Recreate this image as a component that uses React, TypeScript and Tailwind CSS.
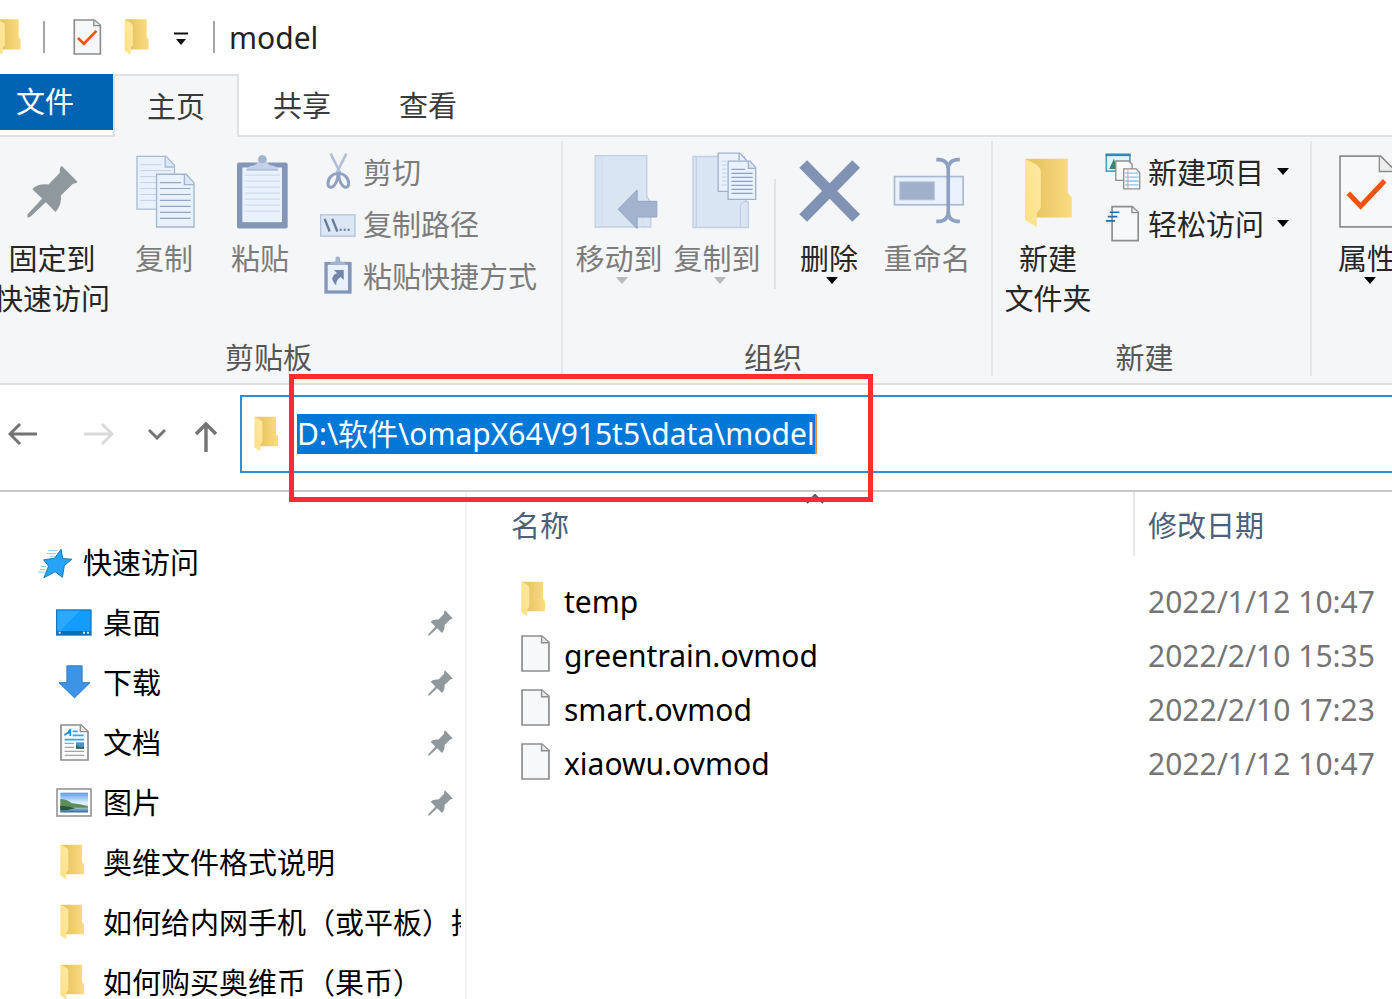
import { useEffect, useRef, useState } from "react";
import type { ReactNode } from "react";

type IconProps = { className?: string };

const Folder = ({ className = "w-6 h-9" }: IconProps) => (
  <svg viewBox="0 0 72 106" className={className} aria-hidden="true">
    <defs>
      <linearGradient id="folderBack" x1="0" x2="1">
        <stop offset="0.3" stopColor="#eac765" />
        <stop offset="1" stopColor="#fbdc82" />
      </linearGradient>
      <linearGradient id="folderFlap" x1="0" x2="1" y1="1" y2="0">
        <stop offset="0" stopColor="#ffdf83" />
        <stop offset="1" stopColor="#ffe9a8" />
      </linearGradient>
    </defs>
    <path d="M2 1H66V53L72 60V90H18V40L2 4Z" fill="url(#folderBack)" />
    <path
      d="M1 2C12 6 25 12 25 20V74C25 80 19 80 19 86V105L1 93Z"
      fill="url(#folderFlap)"
    />
  </svg>
);

const Pin = ({ className = "w-[25px] h-[26px]" }: IconProps) => (
  <svg viewBox="82 76 152 156" className={className} aria-hidden="true">
    <path
      d="M185 77L233 126Q227 131 219 131L183 166Q186 195 167 215L138 186L92 229Q84 233 83 230L84 222L127 175L98 147Q112 130 146 133L180 98Q178 84 185 77Z"
      fill="#8f999d"
    />
  </svg>
);

const File = ({ className = "w-[29px] h-[37px]" }: IconProps) => (
  <svg viewBox="0 0 86 110" className={className} aria-hidden="true">
    <path d="M3 3H62L83 22V107H3Z" fill="#f7f8f9" stroke="#8d8d8d" strokeWidth="5" />
    <path d="M61 4V23H82" fill="#e8e8e8" stroke="#8d8d8d" strokeWidth="4" />
  </svg>
);

const CheckedFile = ({ className }: IconProps) => (
  <svg viewBox="222 59 86 109" className={className} aria-hidden="true">
    <path d="M225 62H286L304 78V165H225Z" fill="#f7f8f9" stroke="#8d8d8d" strokeWidth="5" />
    <path d="M284 63V79H303" fill="#e8e8e8" stroke="#8d8d8d" strokeWidth="4" />
    <path d="M236 116L254 134L292 95" fill="none" stroke="#f4510b" strokeWidth="8" />
  </svg>
);

const Properties = () => (
  <svg viewBox="1077 75 168 218" className="w-14 h-[73px]" aria-hidden="true">
    <path d="M1080 78H1202L1242 118V290H1080Z" fill="#f7f8f9" stroke="#8d8d8d" strokeWidth="5" />
    <path d="M1198 79V124H1242" fill="#ececec" stroke="#8d8d8d" strokeWidth="4" />
    <path d="M1105 189L1142 228L1214 152" fill="none" stroke="#f4510b" strokeWidth="15" />
  </svg>
);

const Caret = ({ className = "text-black" }: IconProps) => (
  <svg viewBox="0 0 14 7" className={`w-3.5 h-[7px] ${className}`} aria-hidden="true">
    <path d="M1 0H13L7 7Z" fill="currentColor" />
  </svg>
);

const Copy = () => (
  <svg viewBox="403 44 184 220" className="w-[61px] h-[73px]" aria-hidden="true">
    <g fill="#e9f1fc" stroke="#a9b9d3" strokeWidth="4">
      <path d="M412 48H500L525 75V207H412Z" />
      <path d="M497 48V80H525" fill="#dce7f6" />
    </g>
    <path d="M422 73H487M422 91H515M422 109H515M422 127H515M422 145H515M422 163H515M422 181H515" stroke="#c4d1e6" strokeWidth="3" />
    <g fill="#e9f1fc" stroke="#a3b4d0" strokeWidth="4">
      <path d="M471 102H560L584 128V261H471Z" />
      <path d="M555 102V133H584" fill="#dce7f6" />
    </g>
    <path d="M481 127H545M481 145H574M481 163H574M481 181H574M481 199H574M481 217H574M481 235H574" stroke="#93a5c4" strokeWidth="3.5" />
  </svg>
);

const Clipboard = () => (
  <svg viewBox="700 40 168 224" className="w-14 h-[75px]" aria-hidden="true">
    <rect x="715" y="65" width="152" height="198" rx="6" fill="#8496b8" />
    <rect x="731" y="80" width="119" height="164" fill="#e9f1fc" />
    <path d="M738 103H844M738 121H844M738 139H844M738 157H844M738 175H844M738 193H844M738 211H844" stroke="#cfdbec" strokeWidth="4" />
    <path d="M742 89Q746 76 764 74Q776 70 778 62A14 14 0 1 1 804 62Q806 70 818 74Q836 76 840 89Z" fill="#c4d1e6" />
    <circle cx="791" cy="55" r="12" fill="#a5b4cd" />
    <path d="M744 87H838" stroke="#aab9d2" strokeWidth="4" />
  </svg>
);

const Scissors = () => (
  <svg viewBox="76 38 76 114" className="w-[25px] h-[38px]" aria-hidden="true">
    <path d="M90 42L121 104" stroke="#b2c0d8" strokeWidth="8" />
    <path d="M138 42L107 104" stroke="#b2c0d8" strokeWidth="8" />
    <g fill="none" stroke="#8fa1c0" strokeWidth="9">
      <path d="M112 103C96 102 82 116 82 133C82 146 92 147 99 141C108 133 113 115 112 103Z" />
      <path d="M115 103C131 102 145 116 145 133C145 146 135 147 128 141C119 133 114 115 115 103Z" />
    </g>
  </svg>
);

const CopyPath = () => (
  <svg viewBox="60 219 108 68" className="mt-1 w-9 h-[23px]" aria-hidden="true">
    <rect x="62" y="221" width="103" height="64" fill="#dce7f5" stroke="#b6c4da" strokeWidth="4" />
    <path d="M74 233L89 271M97 233L112 271" stroke="#64799c" strokeWidth="7" />
    <path d="M119 266h6M131 266h6M143 266h6" stroke="#64799c" strokeWidth="6" />
  </svg>
);

const PasteShortcut = () => (
  <svg viewBox="71 345 85 116" className="w-7 h-[38px]" aria-hidden="true">
    <rect x="72" y="363" width="83" height="97" fill="#8496b8" />
    <rect x="82" y="372" width="62" height="78" fill="#e9f1fc" />
    <path d="M86 372Q90 363 106 361V350Q113 343 120 350V361Q136 363 140 372Z" fill="#a5b4cd" />
    <path d="M101 388H131V418L121 409Q107 418 108 435Q92 418 97 409Q102 399 111 398Z" fill="#7387ab" />
  </svg>
);

const MoveTo = () => (
  <svg viewBox="60 36 230 234" className="w-[77px] h-[78px]" aria-hidden="true">
    <path d="M102 47H257V170L269 186V261H102Z" fill="#dae5f4" stroke="#c0cfe5" strokeWidth="4" />
    <path d="M112 50V258M122 50V258M246 190V258" stroke="#cdd9ec" strokeWidth="2" />
    <path d="M171 208L228 150V184H287V231H228V266Z" fill="#a3b3ce" stroke="#93a5c4" strokeWidth="3" />
  </svg>
);

const CopyTo = () => (
  <svg viewBox="350 34 238 234" className="w-[79px] h-[78px]" aria-hidden="true">
    <path d="M395 47H550V175L562 186V261H395Z" fill="#dae5f4" stroke="#c0cfe5" strokeWidth="4" />
    <path d="M405 50V258M538 258V195Q545 180 558 184" fill="none" stroke="#b9c9e0" strokeWidth="3" />
    <g fill="#e9f1fc" stroke="#9fb0cd" strokeWidth="4">
      <path d="M471 37H536L555 57V152H471Z" />
      <path d="M501 61H567L584 80V176H501Z" />
      <path d="M562 61V83H584" fill="#dce7f6" />
      <path d="M534 38V59" />
    </g>
    <path d="M482 61H497M482 73H497M482 85H497M482 97H497M482 109H497M482 121H497M482 133H497" stroke="#c4d1e6" strokeWidth="3" />
    <path d="M511 86H552M511 98H575M511 110H575M511 122H575M511 134H575M511 146H575M511 158H575" stroke="#8fa1c0" strokeWidth="4" />
  </svg>
);

const Delete = () => (
  <svg viewBox="715 58 188 192" className="w-[63px] h-16" aria-hidden="true">
    <path d="M730 73L889 235M889 73L730 235" stroke="#8193b4" strokeWidth="33" />
  </svg>
);

const Rename = () => (
  <svg viewBox="983 50 228 208" className="w-[76px] h-[69px]" aria-hidden="true">
    <rect x="999" y="109" width="207" height="85" fill="#e9f1fc" stroke="#a9b9d3" strokeWidth="5" />
    <rect x="1015" y="125" width="104" height="54" fill="#a0b0cb" stroke="#b4c2d9" strokeWidth="3" />
    <path d="M1125 58H1136Q1161 62 1161 86V214Q1161 240 1136 244H1125M1196 58H1186Q1161 62 1161 86M1161 214Q1161 240 1186 244H1196" fill="none" stroke="#8fa1c0" strokeWidth="11" />
  </svg>
);

const NewItem = () => (
  <svg viewBox="373 68 110 112" className="w-9 h-[37px]" aria-hidden="true">
    <rect x="377" y="73" width="72" height="50" fill="#e6f3fa" stroke="#4c9dc4" strokeWidth="5" />
    <path d="M375 73H451" stroke="#2f88b8" strokeWidth="8" />
    <path d="M386 116L400 85L412 116Z" fill="#3b8577" />
    <path d="M406 92H446L456 103V151H406Z" fill="#fafafa" stroke="#8d8d8d" strokeWidth="4" />
    <path d="M430 116H468L479 128V177H430Z" fill="#fafafa" stroke="#8d8d8d" strokeWidth="4" />
    <path d="M434 129H476M434 141H476M434 153H476M434 165H476" stroke="#8cc3ee" strokeWidth="4" />
    <path d="M443 120V175" stroke="#ef8f94" strokeWidth="3" />
  </svg>
);

const EasyAccess = () => (
  <svg viewBox="368 224 108 112" className="w-9 h-[37px]" aria-hidden="true">
    <path d="M389 229H450L468 246V332H389Z" fill="#f7f8f9" stroke="#8d8d8d" strokeWidth="5" />
    <path d="M449 230V247H467" fill="#e8e8e8" stroke="#8d8d8d" strokeWidth="4" />
    <path d="M382 246H411M376 259H405M370 272H398" stroke="#1f6cb0" strokeWidth="5" />
  </svg>
);

const QuickAccess = () => (
  <svg viewBox="110 52 109 94" className="w-9 h-[31px]" aria-hidden="true">
    <path d="M144 60H172M140 69H166M148 77H164M121 108H138M113 125H133M119 117H134" stroke="#8cc8f0" strokeWidth="3" />
    <path
      d="M183 56L188 84L216 86L193 105L187 141L165 124L131 142L145 107L130 88L163 83Z"
      fill="#27a3f5"
      stroke="#1778bd"
      strokeWidth="3"
    />
  </svg>
);

const Desktop = () => (
  <svg viewBox="168 238 109 82" className="w-9 h-[27px]" aria-hidden="true">
    <rect x="170" y="241" width="104" height="76" fill="#129cfb" stroke="#1272b5" strokeWidth="4" />
    <path d="M172 243H240L180 304H172Z" fill="#2aa9ff" />
    <rect x="172" y="305" width="101" height="11" fill="#0d6bb0" />
    <path d="M176 310h6M250 310h6M262 310h6" stroke="#d9efff" strokeWidth="6" />
  </svg>
);

const Download = () => (
  <svg viewBox="173 406 100 102" className="w-[33px] h-[34px]" aria-hidden="true">
    <path d="M200 408H246V459H270L223 505L176 459H200Z" fill="#3d94e4" stroke="#2b79c2" strokeWidth="3" />
  </svg>
);

const Documents = () => (
  <svg viewBox="180 580 87 111" className="w-[29px] h-[37px]" aria-hidden="true">
    <path d="M183 583H243L264 603V688H183Z" fill="#fafafa" stroke="#8d8d8d" strokeWidth="5" />
    <path d="M241 584V603H263" fill="#e8e8e8" stroke="#8d8d8d" strokeWidth="4" />
    <path d="M193 613Q207 606 211 595V616M201 607H212" fill="none" stroke="#1a8fdc" strokeWidth="5" />
    <path d="M218 602H233M218 614H251M194 627H252" stroke="#3aa5ea" strokeWidth="5" />
    <path d="M194 638H222M194 650H222M194 662H252M194 674H252" stroke="#a5a5a5" strokeWidth="4" />
    <rect x="228" y="635" width="24" height="19" fill="#4f8fce" />
    <path d="M228 654V643L240 650L252 648V654Z" fill="#2f6a4b" />
  </svg>
);

const Pictures = () => (
  <svg viewBox="168 771 108 87" className="w-9 h-[29px]" aria-hidden="true">
    <defs>
      <linearGradient id="sky" x2="0" y2="1">
        <stop offset="0" stopColor="#5b9bf0" />
        <stop offset="0.55" stopColor="#e8f4fc" />
        <stop offset="1" stopColor="#5c9cc4" />
      </linearGradient>
      <linearGradient id="lake" x2="0" y2="1">
        <stop offset="0" stopColor="#b5d3e4" />
        <stop offset="1" stopColor="#2f6a99" />
      </linearGradient>
    </defs>
    <rect x="171" y="774" width="102" height="81" fill="#fff" stroke="#989898" strokeWidth="5" />
    <rect x="181" y="785" width="83" height="59" fill="url(#sky)" />
    <path d="M181 828H264V844H181Z" fill="url(#lake)" />
    <path d="M181 804Q200 804 214 816Q240 818 264 826V830H181Z" fill="#5d8f5b" />
    <path d="M181 824Q205 824 226 832L200 838H181Z" fill="#28593d" />
  </svg>
);

const Divider = () => <span className="w-0.5 h-8 bg-[#a6a6a6]" />;

type BigButtonProps = {
  icon: ReactNode;
  lines: string[];
  disabled?: boolean;
  caret?: boolean;
  className?: string;
};

const BigButton = ({ icon, lines, disabled, caret, className = "w-[98px]" }: BigButtonProps) => (
  <button
    type="button"
    disabled={disabled}
    className={`flex flex-col items-center shrink-0 leading-10 whitespace-nowrap text-[#262626] disabled:text-[#7c7c7c] ${className}`}
  >
    <span className="flex h-[92px] items-center justify-center pb-1">{icon}</span>
    {lines.map((line) => (
      <span key={line}>{line}</span>
    ))}
    {caret && (
      <span className="-mt-0.5 pl-1.5 leading-none">
        <Caret className={disabled ? "text-[#b9b9b9]" : "text-black"} />
      </span>
    )}
  </button>
);

type SmallButtonProps = {
  icon: ReactNode;
  label: string;
  disabled?: boolean;
  caret?: boolean;
};

const SmallButton = ({ icon, label, disabled, caret }: SmallButtonProps) => (
  <button
    type="button"
    disabled={disabled}
    className="flex h-[52px] items-center whitespace-nowrap text-[#262626] disabled:text-[#7c7c7c]"
  >
    <span className="mr-[7px] flex w-9 justify-center pb-1">{icon}</span>
    {label}
    {caret && (
      <span className="ml-3 pb-1">
        <Caret />
      </span>
    )}
  </button>
);

type GroupProps = { label: string; className: string; children: ReactNode };

const RibbonGroup = ({ label, className, children }: GroupProps) => (
  <section
    className={`flex h-[235px] shrink-0 flex-col border-r-2 border-[#e4e6e8] pt-1.5 ${className}`}
  >
    <div className="flex flex-1 items-start">{children}</div>
    <h2 className="h-9 text-center leading-9 text-[#555]">{label}</h2>
  </section>
);

const tabs = ["主页", "共享", "查看"];

const places = [
  { name: "桌面", icon: <Desktop />, pinned: true },
  { name: "下载", icon: <Download />, pinned: true },
  { name: "文档", icon: <Documents />, pinned: true },
  { name: "图片", icon: <Pictures />, pinned: true },
  { name: "奥维文件格式说明", icon: <Folder />, pinned: false },
  { name: "如何给内网手机（或平板）拷", icon: <Folder />, pinned: false },
  { name: "如何购买奥维币（果币）", icon: <Folder />, pinned: false },
];

const files = [
  { name: "temp", date: "2022/1/12 10:47", folder: true },
  { name: "greentrain.ovmod", date: "2022/2/10 15:35", folder: false },
  { name: "smart.ovmod", date: "2022/2/10 17:23", folder: false },
  { name: "xiaowu.ovmod", date: "2022/1/12 10:47", folder: false },
];

const App = () => {
  const [activeTab, setActiveTab] = useState("主页");
  const [path, setPath] = useState("D:\\软件\\omapX64V915t5\\data\\model");
  const addressRef = useRef<HTMLInputElement>(null);

  useEffect(() => {
    addressRef.current?.focus();
    addressRef.current?.select();
  }, []);

  return (
    <div className="flex h-screen flex-col overflow-hidden bg-white font-['Noto_Sans','Noto_Sans_CJK_SC',sans-serif] text-[29px] text-black">
      <header className="flex h-[74px] shrink-0 items-center">
        <Folder className="-ml-1 mr-[22px] h-9 w-[25px]" />
        <Divider />
        <button type="button" aria-label="属性" className="ml-7">
          <CheckedFile className="h-9 w-[29px]" />
        </button>
        <button type="button" aria-label="新建文件夹" className="ml-[22px]">
          <Folder className="h-9 w-[25px]" />
        </button>
        <button type="button" aria-label="自定义快速访问工具栏" className="ml-6 mr-6">
          <svg viewBox="0 0 16 14" className="mt-1 h-3.5 w-4" aria-hidden="true">
            <path d="M1 1.5H15" stroke="#111" strokeWidth="2" />
            <path d="M3 7H13L8 13Z" fill="#111" />
          </svg>
        </button>
        <Divider />
        <h1 className="ml-3.5 text-[30px] text-[#222]">model</h1>
      </header>

      <nav className="flex h-[63px] shrink-0">
        <div className="border-b-2 border-[#dfe1e3]">
          <button type="button" className="h-14 w-[113px] bg-[#0063b1] pl-4 text-left text-white">
            文件
          </button>
        </div>
        {tabs.map((tab) => (
          <button
            key={tab}
            type="button"
            onClick={() => setActiveTab(tab)}
            className={`w-[126px] border-[#dfe1e3] ${
              tab === activeTab
                ? "border-x-2 border-t-2 bg-[#f5f6f7] text-[#3a3a3a]"
                : "border-b-2 pt-0.5 text-[#3a3a3a]"
            }`}
          >
            {tab}
          </button>
        ))}
        <div className="flex-1 border-b-2 border-[#dfe1e3]" />
      </nav>

      <div className="flex shrink-0 border-b-2 border-[#dcdee0] bg-[#f5f6f7] pt-1 pb-[7px]">
        <RibbonGroup label="剪贴板" className="pr-6">
          <BigButton
            icon={<Pin className="h-[53px] w-[51px]" />}
            lines={["固定到", "快速访问"]}
            className="mr-3 w-[104px]"
          />
          <BigButton icon={<Copy />} lines={["复制"]} disabled className="w-24" />
          <BigButton icon={<Clipboard />} lines={["粘贴"]} disabled className="mr-3 w-24" />
          <div>
            <SmallButton icon={<Scissors />} label="剪切" disabled />
            <SmallButton icon={<CopyPath />} label="复制路径" disabled />
            <SmallButton icon={<PasteShortcut />} label="粘贴快捷方式" disabled />
          </div>
        </RibbonGroup>
        <RibbonGroup label="组织" className="pr-[15px] pl-[7px]">
          <BigButton icon={<MoveTo />} lines={["移动到"]} disabled caret />
          <BigButton icon={<CopyTo />} lines={["复制到"]} disabled caret />
          <span className="mt-8 mr-1 ml-2 h-[110px] w-0.5 bg-[#e1e3e5]" />
          <BigButton icon={<Delete />} lines={["删除"]} caret />
          <BigButton icon={<Rename />} lines={["重命名"]} disabled />
        </RibbonGroup>
        <RibbonGroup label="新建" className="pr-5 pl-1.5">
          <BigButton
            icon={<Folder className="mt-1 h-[70px] w-12" />}
            lines={["新建", "文件夹"]}
            className="mr-2 w-[98px]"
          />
          <div>
            <SmallButton icon={<NewItem />} label="新建项目" caret />
            <SmallButton icon={<EasyAccess />} label="轻松访问" caret />
          </div>
        </RibbonGroup>
        <div className="flex flex-1 items-start pt-1.5 pl-1.5">
          <BigButton icon={<Properties />} lines={["属性"]} caret />
        </div>
      </div>

      <div className="flex h-[107px] shrink-0 items-start border-b-2 border-[#c8c8c8] pt-2.5">
        <div className="flex h-[78px] items-center pr-[22px] pl-2">
          <button type="button" aria-label="后退">
            <svg viewBox="0 0 30 22" className="h-[22px] w-[30px]" aria-hidden="true">
              <path d="M29 11H2M12 1L2 11L12 21" fill="none" stroke="#747474" strokeWidth="3" />
            </svg>
          </button>
          <button type="button" aria-label="前进" disabled className="ml-[46px]">
            <svg viewBox="0 0 30 22" className="h-[22px] w-[30px]" aria-hidden="true">
              <path d="M0 11H28M18 1L28 11L18 21" fill="none" stroke="#dadada" strokeWidth="3" />
            </svg>
          </button>
          <button type="button" aria-label="最近浏览的位置" className="ml-[34px]">
            <svg viewBox="0 0 18 12" className="h-3 w-[18px]" aria-hidden="true">
              <path d="M1 2L9 10L17 2" fill="none" stroke="#747474" strokeWidth="3" />
            </svg>
          </button>
          <button type="button" aria-label="上移" className="ml-7">
            <svg viewBox="0 0 24 31" className="mt-1 h-[31px] w-6" aria-hidden="true">
              <path d="M12 31V3M2 13L12 3L22 13" fill="none" stroke="#747474" strokeWidth="3.4" />
            </svg>
          </button>
        </div>
        <div className="flex h-[78px] flex-1 items-center border-2 border-r-0 border-[#2d8edb] pl-3">
          <Folder className="mr-[19px] h-9 w-6" />
          <div className="relative">
            <input
              ref={addressRef}
              aria-label="地址"
              value={path}
              onChange={(e) => setPath(e.target.value)}
              className="block h-10 border-r-2 border-[#e8903c] bg-white text-[30px] leading-10 outline-none field-sizing-content selection:bg-[#0078d7] selection:text-white"
            />
            <span className="pointer-events-none absolute -top-10 -right-14 -bottom-12 -left-2 z-10 border-[5px] border-[#ff2d2d]" />
          </div>
        </div>
      </div>

      <div className="flex min-h-0 flex-1">
        <aside className="w-[467px] shrink-0 border-r-2 border-[#f4f4f4] pt-[41px]">
          <a href="#quick" className="flex h-[60px] items-center gap-2.5 pl-[37px]">
            <QuickAccess />
            快速访问
          </a>
          {places.map((place) => (
            <a
              key={place.name}
              href="#place"
              className="mr-1 flex h-[60px] items-center gap-[11px] overflow-hidden pl-14 whitespace-nowrap"
            >
              <span
                className={`flex w-9 shrink-0 pb-0.5 ${place.pinned ? "justify-center" : "pl-1"}`}
              >
                {place.icon}
              </span>
              {place.name}
              {place.pinned && <Pin className="mr-2 ml-auto h-[26px] w-[25px]" />}
            </a>
          ))}
        </aside>

        <main className="flex-1">
          <table className="w-full table-fixed text-left">
            <thead>
              <tr className="h-[82px] align-top text-[#4c607a]">
                <th className="relative p-0 pl-11 font-normal">
                  <div className="h-16 leading-[68px]">名称</div>
                  <svg
                    viewBox="0 0 18 10"
                    className="absolute top-0.5 left-1/2 ml-1.5 h-2.5 w-[18px]"
                    aria-hidden="true"
                  >
                    <path d="M1 9L9 1L17 9" fill="none" stroke="#555" strokeWidth="2" />
                  </svg>
                </th>
                <th className="w-[259px] p-0 font-normal">
                  <div className="h-16 border-l-2 border-[#e6e6e6] pl-[13px] leading-[68px]">
                    修改日期
                  </div>
                </th>
              </tr>
            </thead>
            <tbody className="text-[30px]">
              {files.map((file) => (
                <tr key={file.name} className="h-[54px]">
                  <td className="p-0 pl-[54px]">
                    <div className="flex items-center">
                      <span className="mr-3.5 w-[29px] pb-1">
                        {file.folder ? <Folder /> : <File />}
                      </span>
                      {file.name}
                    </div>
                  </td>
                  <td className="p-0 pl-[15px] text-[#757575]">{file.date}</td>
                </tr>
              ))}
            </tbody>
          </table>
        </main>
      </div>
    </div>
  );
};

export default App;
